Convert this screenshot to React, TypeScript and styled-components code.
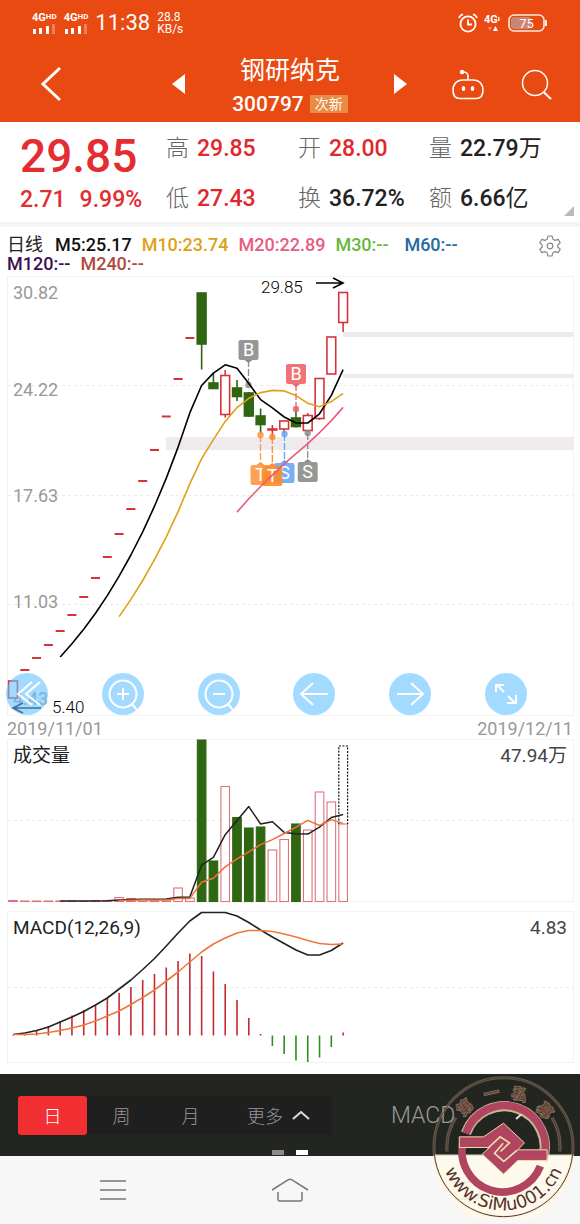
import React from 'react';
import styled, { createGlobalStyle } from 'styled-components';

const GlobalStyle = createGlobalStyle`
  * { box-sizing: border-box; }
  body {
    margin: 0;
    background: #fff;
    color: #222;
    font-family: Roboto, "Noto Sans CJK SC", sans-serif;
  }
  button {
    border: 0;
    padding: 0;
    background: none;
    color: inherit;
    font: inherit;
    cursor: pointer;
  }
  svg { display: block; }
  h1, dl, dd, dt, p, h2 { margin: 0; font-size: inherit; font-weight: inherit; }
`;

/* ---------- layout ---------- */

const Page = styled.div`
  position: relative;
  min-height: 100vh;
`;

const Header = styled.header`
  background: #e84a12;
  color: #fff;
`;

const StatusBar = styled.div`
  display: flex;
  align-items: center;
  justify-content: space-between;
  height: 46px;
  padding: 0 32px;
`;

const StatusGroup = styled.div<{ $gap: number }>`
  display: flex;
  align-items: center;
  gap: ${(p) => p.$gap}px;
`;

const Signal = styled.div`
  font-size: 11px;
  line-height: 10px;
  font-weight: 700;
  svg { margin-top: 1px; }
  sup {
    font-size: 8px;
    line-height: 8px;
    vertical-align: 2px;
  }
`;

const Clock = styled.time`
  font-size: 22px;
  line-height: 24px;
`;

const Speed = styled.div`
  font-size: 12px;
  line-height: 12px;
  span { display: block; }
`;

const TitleBar = styled.div`
  display: grid;
  grid-template-columns: 1fr auto 1fr;
  align-items: center;
  height: 76px;
`;

const TitleLeft = styled.div`
  display: flex;
  align-items: center;
  justify-content: space-between;
  padding: 0 47px 0 40px;
`;

const TitleRight = styled.div`
  display: flex;
  align-items: center;
  justify-content: space-between;
  padding: 0 28px 0 46px;
`;

const TitleActions = styled.div`
  display: flex;
  align-items: center;
  gap: 36px;
`;

const Title = styled.div`
  display: flex;
  flex-direction: column;
  align-items: center;
  padding-top: 4px;
`;

const StockName = styled.h1`
  font-size: 25px;
  line-height: 36px;
`;

const StockCode = styled.div`
  display: flex;
  align-items: center;
  gap: 6px;
  font-size: 21px;
  line-height: 30px;
  font-weight: 500;
`;

const Tag = styled.span`
  padding: 0 5px;
  border-radius: 1px;
  background: #e98c45;
  font-size: 14px;
  line-height: 18px;
  font-weight: 400;
`;

const Quote = styled.section`
  position: relative;
  display: grid;
  grid-template-columns: 146fr 132fr 131fr 131fr;
  height: 105px;
  padding: 2px 20px 0;
  border-bottom: 5px solid #f5f5f5;
`;

const QuoteColumn = styled.dl`
  display: grid;
  grid-template-rows: 50px 50px;
  align-items: center;
  white-space: nowrap;
`;

const PriceColumn = styled.div`
  display: grid;
  grid-template-rows: 50px 50px;
  align-items: center;
`;

const Price = styled.div`
  padding-top: 14px;
  color: #e42c31;
  font-size: 46px;
  line-height: 50px;
  font-weight: 500;
`;

const Change = styled.div`
  display: flex;
  gap: 14px;
  color: #e42c31;
  font-size: 23px;
  font-weight: 500;
`;

const Stat = styled.div`
  display: flex;
  align-items: center;
  gap: 8px;
  line-height: 30px;
`;

const StatLabel = styled.dt`
  color: #666;
  font-size: 23px;
  font-weight: 300;
`;

const StatValue = styled.dd<{ $up?: boolean }>`
  color: ${(p) => (p.$up ? '#e0282e' : '#222')};
  font-size: 23px;
  font-weight: 500;
  span { font-weight: 400; }
`;

const Corner = styled.svg`
  position: absolute;
  right: 6px;
  bottom: 6px;
`;

const Legend = styled.section`
  display: flex;
  align-items: flex-start;
  justify-content: space-between;
  height: 49px;
  padding: 8px 19px 0 7px;
`;

const LegendItems = styled.div`
  display: flex;
  flex-wrap: wrap;
  column-gap: 10px;
  max-width: 475px;
  font-size: 18px;
  line-height: 19px;
`;

const LegendItem = styled.span<{ $color: string }>`
  min-width: 59px;
  color: ${(p) => p.$color};
  font-weight: 500;
`;

const LegendName = styled.h2`
  min-width: 38px;
`;

const Panel = styled.section<{ $gap: number }>`
  position: relative;
  margin: 0 6px ${(p) => p.$gap}px 7px;
`;

const ChartSvg = styled.svg`
  width: 100%;
  height: auto;
  overflow: visible;
`;

const PanelHead = styled.div`
  position: absolute;
  top: 4px;
  left: 6px;
  right: 7px;
  display: flex;
  justify-content: space-between;
  font-size: 19px;
  line-height: 26px;
`;

const PanelValue = styled.span`
  color: #444;
`;

const ChartTools = styled.div`
  position: absolute;
  left: -1px;
  right: 47px;
  bottom: 1px;
  display: flex;
  justify-content: space-between;
`;

const RoundButton = styled.button`
  width: 42px;
  height: 42px;
  border-radius: 50%;
  background: rgba(102, 193, 255, 0.6);
`;

const DateRow = styled.div`
  display: flex;
  align-items: center;
  justify-content: space-between;
  height: 23px;
  padding: 2px 7px 0 7px;
  color: #999;
  font-size: 18px;
  line-height: 22px;
`;

const Toolbar = styled.div`
  position: relative;
  display: flex;
  align-items: center;
  height: 82px;
  padding: 0 18px;
  background: #232521;
  color: #999;
  overflow: hidden;
`;

const Periods = styled.div`
  display: flex;
  width: 314px;
  height: 39px;
  border-radius: 3px;
  background: #1f1f1f;
`;

const Period = styled.button<{ $active?: boolean; $wide?: boolean }>`
  display: flex;
  flex: ${(p) => (p.$wide ? '1 1 auto' : '0 0 69px')};
  align-items: center;
  justify-content: center;
  gap: 9px;
  border-radius: 3px;
  background: ${(p) => (p.$active ? '#f23033' : 'transparent')};
  color: ${(p) => (p.$active ? '#fff' : '#999')};
  font-size: 18px;
  font-weight: 300;
`;

const IndicatorButton = styled.button`
  display: flex;
  align-items: center;
  gap: 60px;
  margin-left: 59px;
  font-size: 23px;
  font-weight: 300;
`;

const Pager = styled.div`
  position: absolute;
  left: 0;
  right: 0;
  bottom: 1px;
  display: flex;
  justify-content: center;
  gap: 12px;
`;

const PagerMark = styled.span<{ $active?: boolean }>`
  width: 12px;
  height: 5px;
  background: ${(p) => (p.$active ? '#fff' : '#8a8a8a')};
`;

const SystemNav = styled.nav`
  display: flex;
  align-items: center;
  justify-content: space-between;
  height: 68px;
  padding: 0 99px;
  background: #f7f7f7;
`;

const Watermark = styled.svg`
  position: absolute;
  right: 5px;
  bottom: 5px;
  pointer-events: none;
`;

/* ---------- data ---------- */

const STEP = 11.79;
const xAt = (i: number) => 13 + i * STEP;

type Candle = { i: number; top: number; bottom: number; high: number; low: number; up: boolean };

const closes = [
  681, 670, 658, 645, 631, 615, 597, 578, 557, 534, 509, 481, 450, 416.5, 379, 338, 344, 388, 375,
  396, 415, 424, 429, 421, 426, 415, 378, 337, 292,
];

const candles: Candle[] = [
  { i: 0, top: 681, bottom: 698, high: 681, low: 698, up: true },
  { i: 16, top: 293, bottom: 344, high: 293, low: 369.5, up: false },
  { i: 17, top: 383, bottom: 388.5, high: 373, low: 388, up: false },
  { i: 18, top: 375.5, bottom: 414.5, high: 370, low: 417.5, up: true },
  { i: 19, top: 388, bottom: 396.5, high: 380, low: 401, up: false },
  { i: 20, top: 393, bottom: 416, high: 392, low: 417, up: false },
  { i: 21, top: 416, bottom: 424.5, high: 408.5, low: 434, up: false },
  { i: 22, top: 429, bottom: 430, high: 425, low: 437, up: true },
  { i: 23, top: 421, bottom: 429, high: 421, low: 433, up: true },
  { i: 24, top: 418, bottom: 426.5, high: 407, low: 427.5, up: false },
  { i: 25, top: 415.5, bottom: 430.5, high: 413, low: 432, up: true },
  { i: 26, top: 378.5, bottom: 418.5, high: 378, low: 420, up: true },
  { i: 27, top: 337, bottom: 374, high: 337, low: 374, up: true },
  { i: 28, top: 292.5, bottom: 322.5, high: 292, low: 332, up: true },
];

const VOLUME_BASE = 901.5;
const volumes = [
  1, 0.5, 0.5, 0.5, 0.5, 0.5, 0.5, 1, 1, 4, 3, 2, 1.5, 1.5, 13.5, 3.5, 161.5, 40.5, 115, 84, 73.5,
  74.5, 51.5, 62, 77.5, 71.5, 109.5, 99.5, 77.5,
];
const fallingDays = new Set([16, 17, 19, 20, 21, 24]);

const macd = [
  1035, 1034, 1031, 1026, 1021, 1015.5, 1010, 1005, 998, 993, 987, 980, 974, 967.5, 961, 953.5,
  956, 971.5, 984, 1000, 1018, 1034, 1046, 1054, 1060.5, 1062, 1057.5, 1047, 1032.5,
];
const dif = [
  1034.5, 1033, 1030.5, 1027, 1022, 1017, 1011.5, 1005, 998, 989, 980, 969.5, 958.5, 946, 933, 921,
  912.5, 912.5, 912.5, 916, 922.5, 930, 937, 943.5, 950, 955, 955, 950.5, 943,
];
const dea = [
  1034.5, 1034.5, 1034, 1032.5, 1030.5, 1028, 1025, 1021, 1016, 1011, 1004.5, 997.5, 990, 981, 972,
  962, 952, 944, 938, 933, 930.5, 930.5, 931.5, 934, 937, 940.5, 943.5, 944.5, 944,
];

const average = (values: number[], n: number): [number, number][] =>
  values
    .map((_, i): [number, number] => [
      xAt(i),
      values.slice(Math.max(0, i - n + 1), i + 1).reduce((a, b) => a + b, 0) / n,
    ])
    .slice(n - 1);

const toPoints = (list: [number, number][]) =>
  list.map(([x, y]) => `${x.toFixed(1)},${y.toFixed(1)}`).join(' ');

const volumeAverage = (n: number) =>
  toPoints(average(volumes, n).map(([x, v]): [number, number] => [x, VOLUME_BASE - v]));

const RED = '#d6323c';
const GREEN = '#2f6612';
const SIGNAL_FONT = { fontSize: 18, fill: '#fff', textAnchor: 'middle' as const };

const signals = [
  { text: 'B', x: 248.5, box: 340, from: 385, color: '#8b8d8b' },
  { text: 'B', x: 296, box: 364, from: 409, color: '#ee6469' },
  { text: 'T', x: 260.5, box: 465, from: 435, color: '#ff9640' },
  { text: 'S', x: 284.5, box: 463, from: 434, color: '#66a6f5' },
  { text: 'T', x: 272.3, box: 466, from: 437, color: '#ff8a2b' },
  { text: 'S', x: 307.7, box: 462, from: 433, color: '#8b8d8b' },
];

const axis = [
  { text: '30.82', y: 299 },
  { text: '24.22', y: 396 },
  { text: '17.63', y: 502 },
  { text: '11.03', y: 608 },
  { text: '4.43', y: 705 },
];

const legend = [
  { text: 'M5:25.17', color: '#111' },
  { text: 'M10:23.74', color: '#dda116' },
  { text: 'M20:22.89', color: '#e85c80' },
  { text: 'M30:--', color: '#67b83c' },
  { text: 'M60:--', color: '#25699f' },
  { text: 'M120:--', color: '#3c1152' },
  { text: 'M240:--', color: '#b04a3c' },
];

/* ---------- charts ---------- */

function Frame({ y, height, lines }: { y: number; height: number; lines: number[] }) {
  return (
    <g fill="none" stroke="#f3f3f3">
      <rect x="7.5" y={y + 0.5} width="566" height={height - 1} />
      {lines.map((l) => (
        <path key={l} d={`M8 ${l + 0.5}H573`} stroke="#ebebeb" strokeDasharray="3 3" />
      ))}
    </g>
  );
}

function PriceChart() {
  return (
    <ChartSvg viewBox="7 276 567 440" role="img" aria-label="日线">
      <Frame y={276} height={440} lines={[385, 495, 604]} />
      <g fill="#eeeaee">
        <rect x="343" y="332" width="231" height="5" />
        <rect x="343" y="374" width="231" height="4" />
        <rect x="166" y="437" width="408" height="13" />
      </g>
      <g fontSize="18" fill="#999">
        {axis.map((a) => (
          <text key={a.text} x="13" y={a.y}>{a.text}</text>
        ))}
      </g>
      {closes.slice(1, 16).map((y, k) => (
        <path key={y} d={`M${xAt(k + 1) - 4.5} ${y}h9`} stroke={RED} strokeWidth="2" />
      ))}
      {candles.map((c) => {
        const x = xAt(c.i);
        const color = c.up ? RED : GREEN;
        return (
          <g key={c.i} stroke={color} strokeWidth="1.6">
            <path d={`M${x} ${c.high}V${c.top}M${x} ${c.bottom}V${c.low}`} />
            <rect
              x={x - 4.4}
              y={c.top}
              width="8.8"
              height={c.bottom - c.top}
              fill={c.up ? '#fff' : GREEN}
            />
          </g>
        );
      })}
      {signals.map((s) => {
        const above = s.box < s.from;
        const edge = above ? s.box + 20 : s.box;
        const tip = above ? 3 : -3;
        return (
          <g key={s.x}>
            <circle cx={s.x} cy={s.from} r="3.2" fill={s.color} fillOpacity="0.85" />
            <path d={`M${s.x} ${s.from}V${edge}`} stroke={s.color} strokeWidth="1.3" strokeDasharray="7 2" />
            <path d={`M${s.x - 4} ${edge}L${s.x} ${edge + tip}L${s.x + 4} ${edge}Z`} fill={s.color} />
            <rect x={s.x - 10} y={s.box} width="20" height="20" rx="2" fill={s.color} fillOpacity="0.9" />
            <text x={s.x} y={s.box + 16} {...SIGNAL_FONT}>{s.text}</text>
          </g>
        );
      })}
      <g fill="none" strokeWidth="1.6" strokeLinejoin="round">
        <polyline points={toPoints(average(closes, 5))} stroke="#000" />
        <polyline points={toPoints(average(closes, 10))} stroke="#e0a018" />
        <polyline points={toPoints(average(closes, 20))} stroke="#ea5a7c" />
      </g>
      <g fontSize="17" fontWeight="300" fill="#000">
        <text x="261" y="293">29.85</text>
        <text x="52" y="713">5.40</text>
      </g>
      <g fill="none" stroke="#000" strokeWidth="1.6">
        <path d="M316 283H343M333 278L343 283L333 288" />
        <path d="M41 708H13M23 703L13 708L23 713" />
      </g>
    </ChartSvg>
  );
}

function VolumeChart() {
  return (
    <ChartSvg viewBox="7 739 567 163" role="img" aria-label="成交量">
      <Frame y={739} height={163} lines={[820]} />
      {volumes.map((v, i) => {
        const down = fallingDays.has(i);
        return (
          <rect
            key={i}
            x={xAt(i) - 4.3}
            y={VOLUME_BASE - v}
            width="8.6"
            height={v}
            fill={down ? GREEN : '#fff'}
            stroke={down ? GREEN : '#dc747c'}
            strokeWidth="1.1"
          />
        );
      })}
      <path d="M338.8 824V746H347.6V824" fill="none" stroke="#111" strokeWidth="1.2" strokeDasharray="2 1.4" />
      <g fill="none" strokeWidth="1.5" strokeLinejoin="round">
        <polyline points={volumeAverage(5)} stroke="#222" />
        <polyline points={volumeAverage(10)} stroke="#f0703c" />
      </g>
    </ChartSvg>
  );
}

function MacdChart() {
  return (
    <ChartSvg viewBox="7 911 567 152" role="img" aria-label="MACD">
      <Frame y={911} height={152} lines={[987]} />
      {macd.map((y, i) => (
        <path key={i} d={`M${xAt(i)} 1035.5V${y}`} stroke={y > 1036 ? '#2f8f1f' : '#c22a31'} strokeWidth="1.6" />
      ))}
      <g fill="none" strokeWidth="1.6" strokeLinejoin="round">
        <polyline points={toPoints(dif.map((y, i) => [xAt(i), y]))} stroke="#222" />
        <polyline points={toPoints(dea.map((y, i) => [xAt(i), y]))} stroke="#f0763c" />
      </g>
    </ChartSvg>
  );
}

/* ---------- icons ---------- */

function SignalBars() {
  return (
    <svg width="24" height="10" viewBox="0 0 24 10" fill="#fff">
      <rect x="1" y="5" width="3" height="5" />
      <rect x="7" y="4" width="3" height="6" />
      <rect x="14" y="2" width="3" height="8" />
      <rect x="20" y="0" width="3" height="10" opacity="0.3" />
    </svg>
  );
}

function Caret() {
  return (
    <svg width="18" height="10" viewBox="0 0 18 10" fill="none" stroke="#ddd" strokeWidth="2">
      <path d="M1 9L9 2L17 9" />
    </svg>
  );
}

const toolIcons = [
  { label: '最早', d: 'M26 9L12 21L26 32M34 9L20 21L34 32' },
  { label: '放大', d: 'M21 7.5A13.5 13.5 0 1 1 21 34.5A13.5 13.5 0 1 1 21 7.5M30 31L35 37M15 21H27M21 15V27' },
  { label: '缩小', d: 'M21 7.5A13.5 13.5 0 1 1 21 34.5A13.5 13.5 0 1 1 21 7.5M30 31L35 37M15 21H27' },
  { label: '左移', d: 'M35 21H8M20 10L8 21L20 32' },
  { label: '右移', d: 'M8 21H34M22 10L34 21L22 32' },
  { label: '全屏', d: 'M19 19L12 12M11 19V12H19M23 23L30 30M31 22V30H22' },
];

const nameGlyphs = [
  { text: '第', at: '25.5%' },
  { text: '一', at: '43%' },
  { text: '私', at: '59.5%' },
  { text: '募', at: '77%' },
];

function Logo() {
  return (
    <Watermark width="143" height="143" viewBox="307 35 430 430" role="img" aria-label="第一私募">
      <defs>
        <path id="siteArc" d="M332 249A190 190 0 0 0 712 249" />
        <path id="nameArc" d="M372 249A150 150 0 0 1 672 249" />
      </defs>
      <path d="M312 271A210 210 0 0 0 733 271Z" fill="#fffbe9" fillOpacity="0.88" />
      <g fill="none" stroke="#e9dcae">
        <circle cx="522" cy="249" r="209" strokeWidth="9" opacity="0.3" />
        <path d="M352 262A170 170 0 0 1 378 160M668 160A170 170 0 0 1 691 262" strokeWidth="10" opacity="0.3" />
        <path d="M409 207A122 122 0 0 1 639 289" strokeWidth="31" opacity="0.8" />
      </g>
      <g fill="none" stroke="#5a3630" strokeWidth="3">
        <circle cx="522" cy="249" r="209" />
        <path d="M352 262A170 170 0 0 1 378 160M668 160A170 170 0 0 1 691 262" />
      </g>
      <g fill="none" stroke="#b14560" strokeWidth="23">
        <path d="M409 207A122 122 0 0 1 641 286" />
        <path d="M401 232A122 122 0 0 0 633 306" />
      </g>
      <path
        d="M389 218H462L522 177L585 236L565 257H653V289H565L522 330L458 270L480 250H389Z"
        fill="#b14560"
        stroke="#e9dcae"
        strokeWidth="3"
      />
      <path
        d="M474 253L512 218L540 236L513 262M521 237L495 268L523 292L563 258"
        fill="none"
        stroke="#efdfaf"
        strokeWidth="5"
      />
      <g fill="#6b3a32" stroke="#d8cba0" strokeWidth="5" strokeOpacity="0.5">
        {nameGlyphs.map((n) => (
          <text
            key={n.text}
            fontSize="46"
            fontFamily='"Noto Sans CJK SC", sans-serif'
            fontWeight="500"
            textAnchor="middle"
            style={{ paintOrder: 'stroke' }}
          >
            <textPath href="#nameArc" startOffset={n.at}>{n.text}</textPath>
          </text>
        ))}
      </g>
      <text fontSize="53" fontFamily='"DejaVu Sans", sans-serif' fill="#54302c" textAnchor="middle">
        <textPath href="#siteArc" startOffset="50%">www.SiMu001.cn</textPath>
      </text>
    </Watermark>
  );
}

/* ---------- page ---------- */

type StatProps = { label: string; value: string; unit?: string; up?: boolean };

function StatItem({ label, value, unit, up }: StatProps) {
  return (
    <Stat>
      <StatLabel>{label}</StatLabel>
      <StatValue $up={up}>
        {value}
        {unit && <span>{unit}</span>}
      </StatValue>
    </Stat>
  );
}

export default function App() {
  return (
    <Page>
      <GlobalStyle />
      <Header>
        <StatusBar>
          <StatusGroup $gap={7}>
            <Signal>4G<sup>HD</sup><SignalBars /></Signal>
            <Signal>4G<sup>HD</sup><SignalBars /></Signal>
            <Clock>11:38</Clock>
            <Speed><span>28.8</span><span>KB/s</span></Speed>
          </StatusGroup>
          <StatusGroup $gap={6}>
            <svg width="20" height="20" viewBox="0 0 20 20" fill="none" stroke="#fff" strokeWidth="1.8">
              <circle cx="10" cy="11" r="7.6" />
              <path d="M10 6.5V11.5H14" />
              <path d="M1 5Q2 2 5 1.3M15 1.3Q18 2 19 5" />
            </svg>
            <Signal>
              4G<sup>ı</sup>
              <svg width="18" height="6" viewBox="0 0 18 6" fill="#fff">
                <path d="M4 1H8L6 5Z" opacity="0.4" />
                <path d="M9 5H14L11.5 0Z" />
              </svg>
            </Signal>
            <svg width="40" height="18" viewBox="0 0 40 18">
              <rect x="3" y="3" width="20" height="12" rx="3" fill="#c98676" />
              <rect x="1" y="1" width="35" height="16" rx="5" fill="none" stroke="#ffe9df" strokeWidth="1.6" />
              <path d="M38 6V12" stroke="#ffe9df" strokeWidth="2" />
              <text x="18.5" y="13.5" fontSize="13" fill="#fff" textAnchor="middle">75</text>
            </svg>
          </StatusGroup>
        </StatusBar>
        <TitleBar>
          <TitleLeft>
            <button aria-label="返回">
              <svg width="22" height="36" viewBox="0 0 22 36" fill="none" stroke="#fff" strokeWidth="3">
                <path d="M20 2L3 18L20 34" />
              </svg>
            </button>
            <button aria-label="上一只">
              <svg width="13" height="20" viewBox="0 0 13 20" fill="#fff"><path d="M13 0V20L0 10Z" /></svg>
            </button>
          </TitleLeft>
          <Title>
            <StockName>钢研纳克</StockName>
            <StockCode>300797<Tag>次新</Tag></StockCode>
          </Title>
          <TitleRight>
            <button aria-label="下一只">
              <svg width="13" height="20" viewBox="0 0 13 20" fill="#fff"><path d="M0 0V20L13 10Z" /></svg>
            </button>
            <TitleActions>
              <button aria-label="助手">
                <svg width="34" height="31" viewBox="0 0 34 31" fill="none" stroke="#fff" strokeWidth="1.6">
                  <path d="M12 11H22C29 11 32 16 32 21C32 27 30 29.5 25 29.5H9C4 29.5 2 27 2 21C2 16 5 11 12 11Z" />
                  <path d="M17 11V7Q17 3 12 3" />
                  <circle cx="11" cy="3" r="1.5" fill="#fff" />
                  <ellipse cx="12.5" cy="19.5" rx="1" ry="1.8" fill="#fff" />
                  <ellipse cx="21.5" cy="19.5" rx="1" ry="1.8" fill="#fff" />
                </svg>
              </button>
              <button aria-label="搜索">
                <svg width="31" height="31" viewBox="0 0 31 31" fill="none" stroke="#fff" strokeWidth="1.5">
                  <circle cx="14" cy="14" r="12.5" />
                  <path d="M22.5 23L30 30" strokeWidth="2" />
                </svg>
              </button>
            </TitleActions>
          </TitleRight>
        </TitleBar>
      </Header>

      <Quote>
        <PriceColumn>
          <Price>29.85</Price>
          <Change><span>2.71</span><span>9.99%</span></Change>
        </PriceColumn>
        <QuoteColumn>
          <StatItem label="高" value="29.85" up />
          <StatItem label="低" value="27.43" up />
        </QuoteColumn>
        <QuoteColumn>
          <StatItem label="开" value="28.00" up />
          <StatItem label="换" value="36.72%" />
        </QuoteColumn>
        <QuoteColumn>
          <StatItem label="量" value="22.79" unit="万" />
          <StatItem label="额" value="6.66" unit="亿" />
        </QuoteColumn>
        <Corner width="10" height="10" viewBox="0 0 10 10"><path d="M10 0V10H0Z" fill="#bbb" /></Corner>
      </Quote>

      <Legend>
        <LegendItems>
          <LegendName>日线</LegendName>
          {legend.map((l) => (
            <LegendItem key={l.text} $color={l.color}>{l.text}</LegendItem>
          ))}
        </LegendItems>
        <button aria-label="设置">
          <svg width="22" height="22" viewBox="0 0 22 22" fill="none" stroke="#888" strokeWidth="1.2" strokeLinejoin="round">
            <path d="M9 1H13L13.8 4.1L16 5.4L19.2 4.4L21.2 7.8L18.8 10V12L21.2 14.2L19.2 17.6L16 16.6L13.8 17.9L13 21H9L8.2 17.9L6 16.6L2.8 17.6L.8 14.2L3.2 12V10L.8 7.8L2.8 4.4L6 5.4L8.2 4.1Z" />
            <circle cx="11" cy="11" r="2.8" />
          </svg>
        </button>
      </Legend>

      <Panel $gap={0}>
        <PriceChart />
        <ChartTools>
          {toolIcons.map((t) => (
            <RoundButton key={t.label} aria-label={t.label}>
              <svg width="42" height="42" viewBox="0 0 42 42" fill="none" stroke="#fff" strokeWidth="2">
                <path d={t.d} />
              </svg>
            </RoundButton>
          ))}
        </ChartTools>
      </Panel>
      <DateRow>
        <time>2019/11/01</time>
        <time>2019/12/11</time>
      </DateRow>
      <Panel $gap={9}>
        <VolumeChart />
        <PanelHead><h2>成交量</h2><PanelValue>47.94万</PanelValue></PanelHead>
      </Panel>
      <Panel $gap={11}>
        <MacdChart />
        <PanelHead><h2>MACD(12,26,9)</h2><PanelValue>4.83</PanelValue></PanelHead>
      </Panel>

      <Toolbar>
        <Periods>
          <Period $active>日</Period>
          <Period>周</Period>
          <Period>月</Period>
          <Period $wide>更多<Caret /></Period>
        </Periods>
        <IndicatorButton>MACD<Caret /></IndicatorButton>
        <Pager><PagerMark /><PagerMark $active /></Pager>
      </Toolbar>
      <SystemNav>
        <button aria-label="菜单">
          <svg width="28" height="22" viewBox="0 0 28 22" stroke="#777" strokeWidth="1.5"><path d="M1 2H27M1 11H27M1 20H27" /></svg>
        </button>
        <button aria-label="主页">
          <svg width="38" height="26" viewBox="0 0 38 26" fill="none" stroke="#777" strokeWidth="1.5">
            <path d="M1 13L17 3Q19 1.5 21 3L37 13M7 15V22Q7 24 9 24H29Q31 24 31 22V15" />
          </svg>
        </button>
        <button aria-label="后退">
          <svg width="28" height="22" viewBox="0 0 28 22" fill="none" stroke="#777" strokeWidth="1.5">
            <path d="M2 3H23Q26 3 26 6V17Q26 20 23 20H2M6 0L2 3L6 7" />
          </svg>
        </button>
      </SystemNav>
      <Logo />
    </Page>
  );
}
